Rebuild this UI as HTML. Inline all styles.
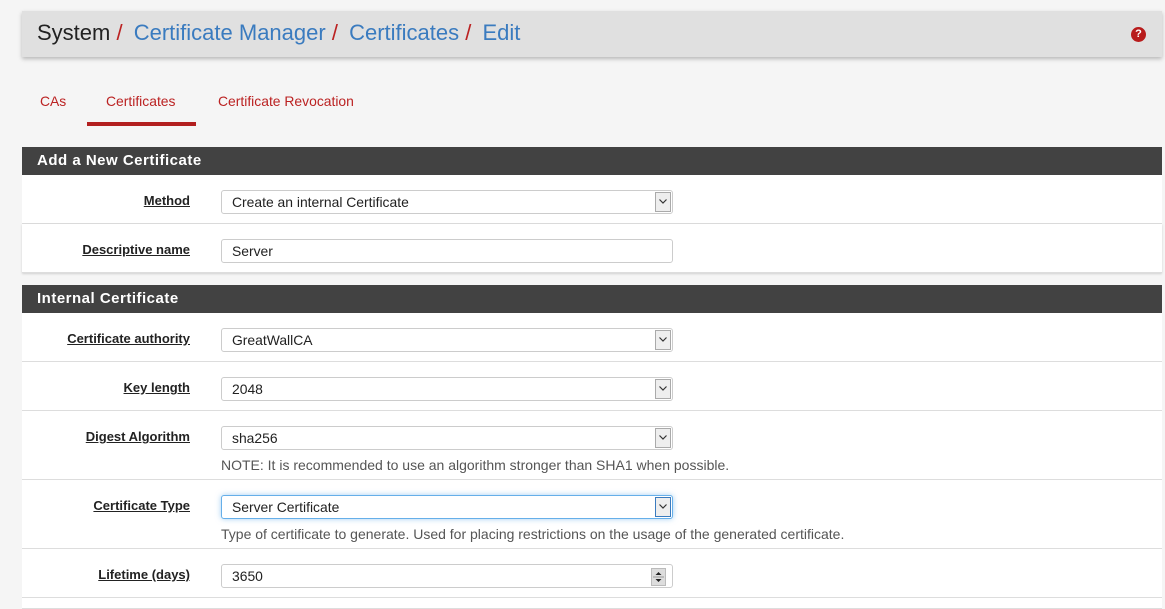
<!DOCTYPE html><html><head><style>
body{margin:0;width:1165px;height:604px;overflow:hidden;background:#f5f5f5;font-family:"Liberation Sans",sans-serif;position:relative}
.hdr{position:absolute;left:22px;top:11px;width:1140px;height:46px;background:#e0e0e0;box-shadow:0 2px 4px rgba(0,0,0,.25)}
.hdr .t{position:absolute;left:15px;top:9px;font-size:22px;color:#222;white-space:nowrap}
.hdr .t a{color:#3a7bbf}.hdr .t s{text-decoration:none;color:#b22;margin-right:5px}
.q{position:absolute;right:16px;top:16px;width:15px;height:15px;border-radius:50%;background:#b81c1c;color:#fff;font-size:11px;font-weight:bold;text-align:center;line-height:15px}
.tab{position:absolute;top:93px;font-size:13.9px;color:#b22}
.ul{position:absolute;left:87px;top:122px;width:109px;height:4px;background:#b21f1f}
.ph{position:absolute;left:22px;width:1140px;height:28px;background:#424242;color:#fff;font-weight:bold;font-size:15px;letter-spacing:.5px;line-height:28px;text-indent:15px}
.row{position:absolute;left:22px;width:1140px;background:#fff;border-bottom:1px solid #ddd}
.lb{position:absolute;right:972px;font-size:13px;font-weight:bold;color:#222;text-decoration:underline;white-space:nowrap}
.in{position:absolute;left:199px;width:450px;height:22px;border:1px solid #ccc;border-radius:3px;font-size:13.9px;line-height:22px;text-indent:10px;color:#222;background:#fff}
.dd{position:absolute;right:1px;top:1px;width:14px;height:18px;border:1px solid #aaa;background:#eee}
.dd svg{position:absolute;left:3px;top:6px}
.nt{position:absolute;left:199px;font-size:14px;color:#555;white-space:nowrap}
</style></head><body>
<div class="hdr"><div class="t">System <s>/</s> <a>Certificate Manager</a> <s>/</s> <a>Certificates</a> <s>/</s> <a>Edit</a></div><div class="q">?</div></div>
<div class="tab" style="left:40px">CAs</div><div class="tab" style="left:106px">Certificates</div><div class="tab" style="left:218px">Certificate Revocation</div><div class="ul"></div>
<div class="ph" style="top:147px">Add a New Certificate</div>
<div class="row" style="top:175px;height:48px"><div class="lb" style="top:18px">Method</div><div class="in" style="top:15px">Create an internal Certificate<div class="dd"><svg width="8" height="5"><path d="M0.5 0.5L4 4L7.5 0.5" fill="none" stroke="#333" stroke-width="1.2"/></svg></div></div></div>
<div class="row" style="top:224px;height:48px;box-shadow:0 1px 2px rgba(0,0,0,.15)"><div class="lb" style="top:18px">Descriptive name</div><div class="in" style="top:15px">Server</div></div>
<div class="ph" style="top:285px">Internal Certificate</div>
<div class="row" style="top:313px;height:48px"><div class="lb" style="top:18px">Certificate authority</div><div class="in" style="top:15px">GreatWallCA<div class="dd"><svg width="8" height="5"><path d="M0.5 0.5L4 4L7.5 0.5" fill="none" stroke="#333" stroke-width="1.2"/></svg></div></div></div>
<div class="row" style="top:362px;height:48px"><div class="lb" style="top:18px">Key length</div><div class="in" style="top:15px">2048<div class="dd"><svg width="8" height="5"><path d="M0.5 0.5L4 4L7.5 0.5" fill="none" stroke="#333" stroke-width="1.2"/></svg></div></div></div>
<div class="row" style="top:411px;height:68px"><div class="lb" style="top:18px">Digest Algorithm</div><div class="in" style="top:15px">sha256<div class="dd"><svg width="8" height="5"><path d="M0.5 0.5L4 4L7.5 0.5" fill="none" stroke="#333" stroke-width="1.2"/></svg></div></div><div class="nt" style="top:46px">NOTE: It is recommended to use an algorithm stronger than SHA1 when possible.</div></div>
<div class="row" style="top:480px;height:68px"><div class="lb" style="top:18px">Certificate Type</div><div class="in" style="top:15px;border-color:#66afe9;box-shadow:0 0 6px rgba(102,175,233,.6)">Server Certificate<div class="dd" style="border-color:#3a7bbf"><svg width="8" height="5"><path d="M0.5 0.5L4 4L7.5 0.5" fill="none" stroke="#333" stroke-width="1.2"/></svg></div></div><div class="nt" style="top:46px">Type of certificate to generate. Used for placing restrictions on the usage of the generated certificate.</div></div>
<div class="row" style="top:549px;height:48px"><div class="lb" style="top:18px">Lifetime (days)</div><div class="in" style="top:15px">3650<div style="position:absolute;right:6px;top:3px;width:13px;height:16px;background:#ddd;border:1px solid #bbb"><svg width="13" height="16" style="position:absolute;left:0;top:0"><path d="M3.5 6L6.5 3L9.5 6Z M3.5 10L6.5 13L9.5 10Z" fill="#222"/><path d="M1 8H12" stroke="#999"/></svg></div></div></div>
<div class="row" style="top:598px;height:10px"></div>
</body></html>
